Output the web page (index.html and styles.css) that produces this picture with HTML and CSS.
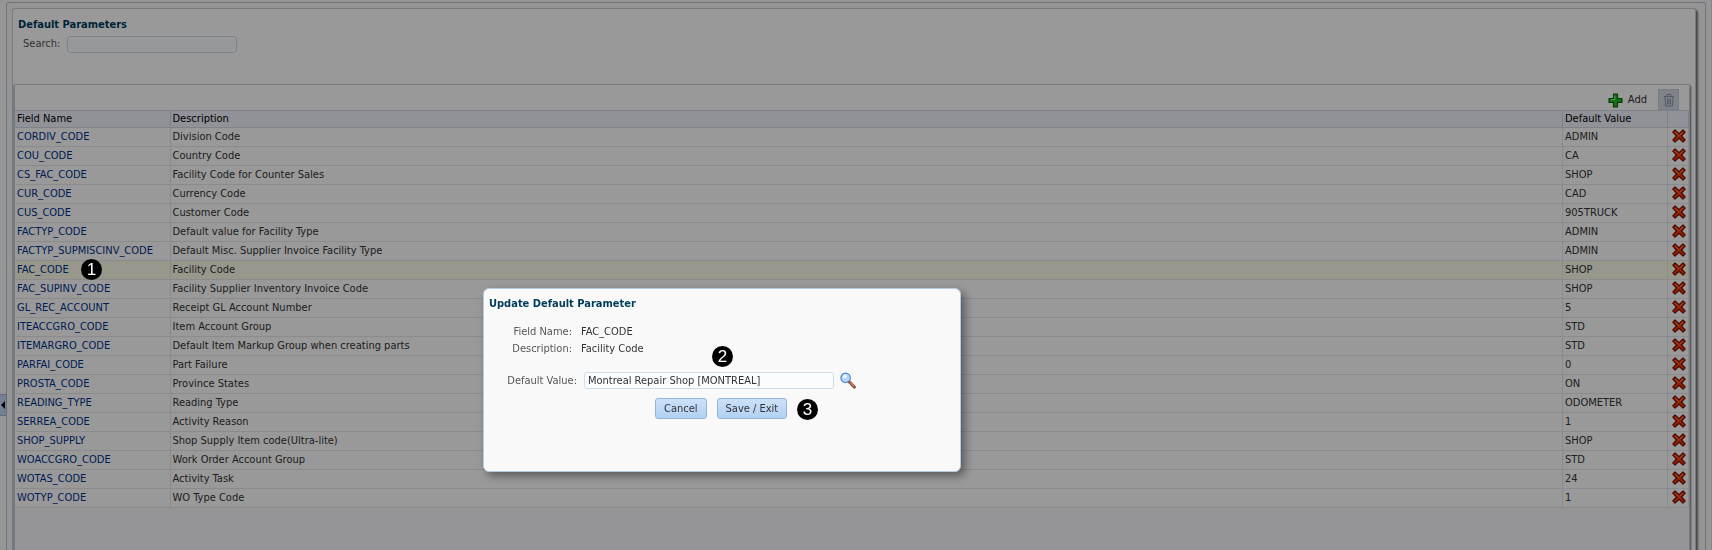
FILE: index.html
```html
<!DOCTYPE html>
<html lang="en">
<head>
    <meta charset="utf-8">
    <title>Default Parameters</title>
    <link rel="stylesheet" href="styles.css">
</head>
<body>
    <svg class="sprite" width="0" height="0">
        <symbol id="delete" viewBox="0 0 14 14">
            <path d="M3 1 L7 4.8 L11 1 L13.2 3.2 L9.5 7 L13.2 10.8 L11 13 L7 9.3 L3 13 L0.8 10.8 L4.5 7 L0.8 3.2 Z" fill="#f03a08" stroke="#7c1000" stroke-width="1.2" stroke-linejoin="round"/>
            <path d="M3 2.9 L6.6 6.4 M11 2.9 L7.5 6.3" stroke="#ff8a50" stroke-width="1" fill="none"/>
        </symbol>
    </svg>

    <div class="page">
        <button class="splitter" aria-label="Collapse menu"></button>
        <div class="outer">
            <main class="panel">
                <h1>Default Parameters</h1>
                <div class="search">
                    <label for="search">Search:</label>
                    <input type="text" id="search">
                </div>

                <div class="grid">
                    <div class="toolbar">
                        <button class="add">
                            <svg width="15" height="15" viewBox="0 0 14 14"><path d="M5.2 1h3.6v4.2h4.2v3.6h-4.2v4.2h-3.6v-4.2h-4.2v-3.6h4.2z" fill="#20c020" stroke="#0a6a14" stroke-width="1.2" stroke-linejoin="round"/><path d="M6.3 2.3v4h-4" fill="none" stroke="#8cf08c"/></svg>
                            Add
                        </button>
                        <button class="trash" aria-label="Delete all">
                            <svg width="12" height="14" viewBox="0 0 12 14" fill="none" stroke="#8a94a8"><path d="M1 3.5h10M4 3V1.5h4V3M2 4l.5 9h7l.5-9M4.5 5.5v6M6 5.5v6M7.5 5.5v6"/></svg>
                        </button>
                    </div>
                    <table>
                        <thead>
                            <tr><th class="name">Field Name</th><th>Description</th><th class="value">Default Value</th><th class="del"></th></tr>
                        </thead>
                        <tbody id="rows"></tbody>
                    </table>
                </div>
            </main>
        </div>
    </div>

    <div class="overlay"></div>
    <span class="badge one">1</span>

    <form class="dialog" role="dialog" aria-labelledby="dialog-title">
        <h2 id="dialog-title">Update Default Parameter</h2>
        <dl>
            <dt>Field Name:</dt><dd>FAC_CODE</dd>
            <dt>Description:</dt><dd>Facility Code</dd>
        </dl>
        <div class="field">
            <label for="default-value">Default Value:</label>
            <input type="text" id="default-value" value="Montreal Repair Shop [MONTREAL]">
            <button type="button" class="lookup" aria-label="Search value">
                <svg width="16" height="17" viewBox="0 0 16 17"><path d="M9.5 10l4.8 5" stroke="#8c5034" stroke-width="3.2" stroke-linecap="round"/><path d="M10 9.8l4.3 4.6" stroke="#c98a68" stroke-width="1.2"/><circle cx="5.6" cy="5.8" r="4.7" fill="#b4d6fc" stroke="#4f82cd" stroke-width="1.2"/><circle cx="4.8" cy="4.6" r="2" fill="#e9f5ff"/></svg>
            </button>
        </div>
        <div class="actions">
            <button type="button">Cancel</button>
            <button type="button">Save / Exit</button>
        </div>
        <span class="badge two">2</span>
        <span class="badge three">3</span>
    </form>

    <script>
    const params = [
        ["CORDIV_CODE", "Division Code", "ADMIN"],
        ["COU_CODE", "Country Code", "CA"],
        ["CS_FAC_CODE", "Facility Code for Counter Sales", "SHOP"],
        ["CUR_CODE", "Currency Code", "CAD"],
        ["CUS_CODE", "Customer Code", "905TRUCK"],
        ["FACTYP_CODE", "Default value for Facility Type", "ADMIN"],
        ["FACTYP_SUPMISCINV_CODE", "Default Misc. Supplier Invoice Facility Type", "ADMIN"],
        ["FAC_CODE", "Facility Code", "SHOP"],
        ["FAC_SUPINV_CODE", "Facility Supplier Inventory Invoice Code", "SHOP"],
        ["GL_REC_ACCOUNT", "Receipt GL Account Number", "5"],
        ["ITEACCGRO_CODE", "Item Account Group", "STD"],
        ["ITEMARGRO_CODE", "Default Item Markup Group when creating parts", "STD"],
        ["PARFAI_CODE", "Part Failure", "0"],
        ["PROSTA_CODE", "Province States", "ON"],
        ["READING_TYPE", "Reading Type", "ODOMETER"],
        ["SERREA_CODE", "Activity Reason", "1"],
        ["SHOP_SUPPLY", "Shop Supply Item code(Ultra-lite)", "SHOP"],
        ["WOACCGRO_CODE", "Work Order Account Group", "STD"],
        ["WOTAS_CODE", "Activity Task", "24"],
        ["WOTYP_CODE", "WO Type Code", "1"]
    ];

    document.getElementById('rows').innerHTML = params.map(([name, desc, value]) => `
        <tr class="${name === 'FAC_CODE' ? 'selected' : ''}">
            <td><a href="#">${name}</a></td>
            <td>${desc}</td>
            <td>${value}</td>
            <td class="del"><button aria-label="Delete ${name}"><svg width="14" height="14"><use href="#delete"/></svg></button></td>
        </tr>`).join('');
    </script>
</body>
</html>
```
FILE: styles.css
```css
* { box-sizing: border-box; }
body { margin: 0; background: #f8f8f8; color: #333; font: 11px/16px "DejaVu Sans Condensed", Tahoma, sans-serif; overflow: hidden; }
h1, h2 { margin: 0; font-size: 11px; line-height: 16px; color: #003d5b; }
button, input { font: inherit; color: inherit; }
button { background: none; border: none; padding: 0; }
a { color: #00318c; text-decoration: none; }
svg { display: block; }
.sprite { position: absolute; }
input { height: 17px; padding: 0 3px; border: 1px solid #d2dce4; border-radius: 3px; background: #fafdff; }

.page { display: flex; height: 100vh; padding: 2px 5px 0 6px; border-right: 1px solid #dce0e4; }
.splitter { position: absolute; left: 0; top: 394px; width: 7px; height: 22px; background: #c2d8f0; border: 1px solid #9db8d2; border-left: none; }
.splitter::before { content: ""; position: absolute; left: 1px; top: 6px; border: 4px solid transparent; border-right-color: #000; border-left: none; }
.outer { flex: 1; display: flex; padding: 5px 9px 0 5px; border: 1px solid #b8c4d0; border-bottom: none; border-radius: 3px 3px 0 0; }
.panel { flex: 1; display: flex; flex-direction: column; border: 1px solid #c4cdd5; border-bottom: none; border-radius: 3px 3px 0 0; box-shadow: 2px 2px 2px #777; background: #fff; padding: 8px 5px 0 0; }
.panel h1 { padding-left: 5px; }
.search { display: flex; align-items: center; gap: 7px; height: 22px; padding-left: 10px; color: #555; }
.search input { width: 170px; }

.grid { flex: 1; margin-top: 29px; border: 1px solid #c4cdd5; border-left-width: 2px; border-bottom: none; border-radius: 3px 3px 0 0; box-shadow: 1px 1px 2px #777; background: #f8f8fe; }
.toolbar { display: flex; justify-content: flex-end; align-items: flex-end; gap: 11px; height: 25px; padding-right: 10px; background: #fff; }
.add { display: flex; align-items: center; gap: 5px; height: 20px; }
.trash { display: flex; align-items: center; justify-content: center; width: 21px; height: 21px; background: #d5dbe6; border: 1px solid #c8cfda; }

table { width: 100%; border-collapse: collapse; table-layout: fixed; background: #fff; }
th, td { height: 19px; padding: 0 2px; border: 1px solid #e8e8ec; border-left: none; text-align: left; line-height: 16px; white-space: nowrap; }
th { height: 17px; background: #f0f3fc; border-color: #d3dbe4; font-weight: normal; color: #000; line-height: 14px; }
.name { width: 155px; }
.value { width: 105px; }
.del { width: 21px; }
td.del { padding: 0 0 2px 2px; }
td.del button { display: block; margin: 0 auto; }
.selected { background: #fcfcea; }

.overlay { position: fixed; inset: 0; background: rgba(0, 0, 0, .4); }
.dialog { position: absolute; left: 483px; top: 288px; width: 478px; height: 184px; padding: 7px 5px; background: #f9f9f9; border: 1px solid #b5cbe2; border-radius: 6px; box-shadow: 4px 4px 8px rgba(0, 0, 0, .4); }
dl { display: grid; grid-template-columns: 83px 1fr; column-gap: 9px; margin: 11px 0 0; line-height: 17px; }
dt { color: #555; text-align: right; }
dd { margin: 0; }
.field { display: flex; align-items: center; height: 17px; margin-top: 15px; }
.field label { width: 88px; color: #555; text-align: right; }
.field input { width: 250px; margin: 0 6px 0 7px; }
.actions { display: flex; gap: 10px; margin: 9px 0 0 166px; }
.actions button { height: 21px; padding: 0 8px; border: 1px solid #92b6da; border-radius: 3px; background: linear-gradient(#cce1f8, #b1d1f3); }

.badge { position: absolute; width: 21px; height: 21px; border-radius: 50%; background: #000; color: #fff; font: 17px/21px "Liberation Sans", Arial, sans-serif; text-align: center; }
.one { left: 81px; top: 259px; }
.two { left: 228px; top: 57px; }
.three { left: 313px; top: 110px; }
```
